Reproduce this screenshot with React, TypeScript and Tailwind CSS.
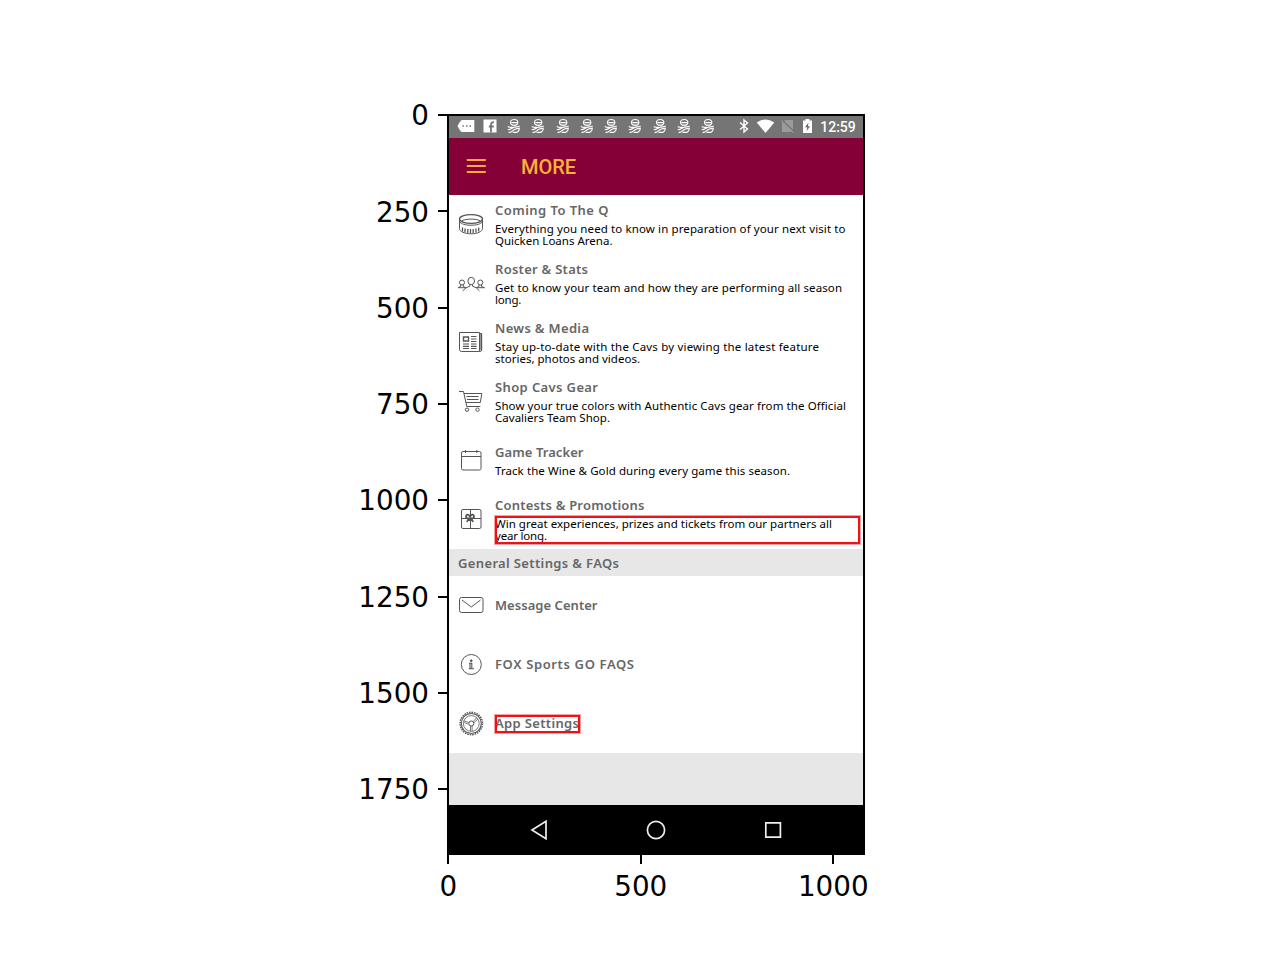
import type { ReactNode } from "react";

const yTicks = [0, 250, 500, 750, 1000, 1250, 1500, 1750];

function Icon({ children }: { children: ReactNode }) {
  return (
    <svg className="mb-[2px] h-7 w-7 shrink-0" viewBox="0 0 28 28" fill="none" stroke="#555" strokeWidth="1">
      {children}
    </svg>
  );
}

const ArenaIcon = () => (
  <Icon>
    <ellipse cx="14" cy="9" rx="11.5" ry="4.3" strokeWidth="1.300" />
    <path d="M4.500 11.200c3-2.800 16-2.800 19 0" />
    <path d="M2.500 9v9.500c0 3 5 5.300 11.500 5.300s11.500-2.300 11.500-5.300V9" />
    <path d="M2.500 11.500c1.500 2.600 6 3.700 11.500 3.700s10-1.100 11.500-3.700" />
    <path d="M5.500 17.500v4M8 18.500v4M10.800 19v4M13.500 19v4M16.200 19v4M19 18.500v4M21.700 17.500v4" strokeWidth="1.300" />
  </Icon>
);
const RosterIcon = () => (
  <Icon>
    <ellipse cx="14.200" cy="12" rx="3.300" ry="3.700" />
    <circle cx="5" cy="13.500" r="2.500" />
    <circle cx="23.300" cy="13.500" r="2.500" />
    <path d="M1 18.700 3.700 17.600V16M6.300 16v1.600L9 18.700M1 18.700h8.200l3.600-1.500v-1.700M15.500 15.500v1.700l3.700 1.500H27.500M27.500 18.700l-3-1.100V16M22 16v1.600l-2.800 1.100M9.200 18.700 5.800 21.800M19.200 18.700l3.200 3.100" />
  </Icon>
);
const NewsIcon = () => (
  <Icon>
    <path d="M2.500 4.500h20v19h-18q-2 0-2-2zM22.500 5.500h2.200v16.500q0 1.500-2 1.500" />
    <path d="M24.200 6v16" strokeWidth="1.600" />
    <path d="M6.500 9h5v4h-5z" strokeWidth="1.400" />
    <path d="M14 8.500h5.500M14 11h5.500M14 13.500h5.500M6 16h6M6 18.300h6M6 20.500h6M14 16h5.500M14 18.300h5.500M14 20.500h5.500" strokeWidth="1.200" />
  </Icon>
);
const CartIcon = () => (
  <Icon>
    <path d="M2 4.500h4.500L9.800 19.500h13.500M7 6.500h17.800L23.300 15.500H9M9.500 9.500H21.500M10 12.500h11.500" />
    <circle cx="10" cy="22.700" r="1.700" />
    <circle cx="20.500" cy="22.700" r="1.700" />
  </Icon>
);
const CalendarIcon = () => (
  <Icon>
    <rect x="4.500" y="5.500" width="19.500" height="18.500" rx="1.500" />
    <path d="M4.500 10.500h19.500M8.500 4v3M19.800 4v3" />
  </Icon>
);
const GiftIcon = () => (
  <Icon>
    <rect x="4.500" y="4.500" width="19.500" height="19" rx="1.500" />
    <path d="M4.500 13.500h19.500M13.500 4.500v19" />
    <path d="M13 12c-1-3.500-4-3-4 0 0 1.200 1 1.500 4 1.500s4-.3 4-1.500c0-3-3-3.500-4 0M11.500 13.500 10 17M14.500 13.500l1.500 3.500M11.500 15h3" strokeWidth="1.800" />
  </Icon>
);
const MailIcon = () => (
  <Icon>
    <rect x="2.500" y="6.500" width="23.500" height="15" rx="2" />
    <path d="M5 9l9.300 7L23.500 9" />
  </Icon>
);
const InfoIcon = () => (
  <Icon>
    <circle cx="14.300" cy="14.500" r="10" />
    <circle cx="14.200" cy="10.700" r=".9" fill="#555" />
    <path d="M12 13.200h2.800v5.300M11.700 18.700h5.300M13 13.500v5" strokeWidth="1.100" />
  </Icon>
);
const GearIcon = () => (
  <Icon>
    <circle cx="14.300" cy="14.500" r="11.200" strokeWidth="1.500" strokeDasharray="1.500 1.010" />
    <circle cx="14.300" cy="14.500" r="10" strokeWidth="1.100" />
    <circle cx="14.300" cy="14.500" r="7.900" strokeWidth=".8" />
    <circle cx="14.300" cy="14.500" r="2.500" />
    <path d="M6.800 11.800l4.900 1.700M7.300 13.500l4 1.700M16.300 12.500l3.300-4M17 13.600l4-3.600M13.500 17v5M15.100 17v5" strokeWidth=".8" />
  </Icon>
);

type Line = { text: string; tracking: string };
type Item = { icon: ReactNode; title: Line; lines: Line[]; boxed?: boolean };

const items: Item[] = [
  {
    icon: <ArenaIcon />,
    title: { text: "Coming To The Q", tracking: "tracking-[0.458px]" },
    lines: [
      { text: "Everything you need to know in preparation of your next visit to", tracking: "tracking-[0.113px]" },
      { text: "Quicken Loans Arena.", tracking: "tracking-[0.008px]" },
    ],
  },
  {
    icon: <RosterIcon />,
    title: { text: "Roster & Stats", tracking: "tracking-[0.273px]" },
    lines: [
      { text: "Get to know your team and how they are performing all season", tracking: "tracking-[0.099px]" },
      { text: "long.", tracking: "tracking-[-0.2px]" },
    ],
  },
  {
    icon: <NewsIcon />,
    title: { text: "News & Media", tracking: "tracking-[0.328px]" },
    lines: [
      { text: "Stay up-to-date with the Cavs by viewing the latest feature", tracking: "tracking-[0.186px]" },
      { text: "stories, photos and videos.", tracking: "tracking-[0.012px]" },
    ],
  },
  {
    icon: <CartIcon />,
    title: { text: "Shop Cavs Gear", tracking: "tracking-[0.379px]" },
    lines: [
      { text: "Show your true colors with Authentic Cavs gear from the Official", tracking: "tracking-[0.085px]" },
      { text: "Cavaliers Team Shop.", tracking: "tracking-[0.027px]" },
    ],
  },
  {
    icon: <CalendarIcon />,
    title: { text: "Game Tracker", tracking: "tracking-[0.075px]" },
    lines: [{ text: "Track the Wine & Gold during every game this season.", tracking: "tracking-[0.078px]" }],
  },
  {
    icon: <GiftIcon />,
    title: { text: "Contests & Promotions", tracking: "tracking-[0.195px]" },
    lines: [
      { text: "Win great experiences, prizes and tickets from our partners all", tracking: "tracking-[0.023px]" },
      { text: "year long.", tracking: "tracking-[-0.193px]" },
    ],
    boxed: true,
  },
];

const settings: Item[] = [
  { icon: <MailIcon />, title: { text: "Message Center", tracking: "tracking-[0.042px]" }, lines: [] },
  { icon: <InfoIcon />, title: { text: "FOX Sports GO FAQS", tracking: "tracking-[0.629px]" }, lines: [] },
  { icon: <GearIcon />, title: { text: "App Settings", tracking: "tracking-[0.342px]" }, lines: [], boxed: true },
];

function Row({ item }: { item: Item }) {
  const titleOnly = item.lines.length === 0;
  return (
    <div className="flex h-[59px] items-center pl-2 text-black">
      {item.icon}
      <div className={`relative ml-[10px] whitespace-nowrap ${titleOnly ? "pb-[2px]" : ""}`}>
        <div className={`h-4 text-[13px] leading-4 font-semibold text-[#666] ${item.title.tracking}`}>{item.title.text}</div>
        {!titleOnly && (
          <div className="pt-[5px]">
            {item.lines.map((line) => (
              <div key={line.text} className={`h-3 text-[11.5px] leading-3 ${line.tracking}`}>
                {line.text}
              </div>
            ))}
          </div>
        )}
        {item.boxed && !titleOnly && (
          <div className="absolute top-[19px] left-0 h-[28px] w-[365px] border-2 border-[#ee1216] shadow-[0_0_0_1px_rgba(238,18,22,0.4)]" />
        )}
        {item.boxed && titleOnly && (
          <div className="absolute top-0 left-0 h-[18px] w-[85px] border-2 border-[#ee1216] shadow-[0_0_0_1px_rgba(238,18,22,0.4)]" />
        )}
      </div>
    </div>
  );
}

function NotificationGlyph() {
  return (
    <svg className="h-4 w-4" viewBox="0 0 16 16" fill="none" stroke="#fff" strokeWidth="1.200" strokeLinecap="round">
      <path d="M4.500 4.500C4.500 2.300 6.200 1.500 8.200 1.500s3.600.8 3.600 3-1.500 2.800-3.500 2.800S4.500 6.700 4.500 4.500zM6 4.600h4.500" />
      <path d="M2.200 8.700c2 1 3.200.5 4.500.6M2.200 11.500c3 .6 4-2 6.500-2.400 2-.3 3.300-.1 4.500-.9M3 14.300c3 .4 4-2.600 6.500-3.300 1.500-.4 2.500-.2 3.500-.8M7.200 14.300c3.800.6 6.400-1 6-4.100" />
    </svg>
  );
}

function StatusBar() {
  return (
    <div className="flex h-[22px] items-center bg-[#757575] pb-[2px] pl-[5px]">
      <div className="flex w-[24px] justify-center">
        <svg className="h-4 w-[18px]" viewBox="0 0 18 16">
          <path d="M5 2h12.300v12H5Q3.500 14 .5 8 3.500 2 5 2z" fill="#fff" />
          <path d="M5.500 8h1.500M9 8h1.500M12.500 8H14" stroke="#777" strokeWidth="1.500" />
        </svg>
      </div>
      <div className="flex w-[24px] justify-center">
        <svg className="h-4 w-4" viewBox="0 0 16 16">
          <path d="M1.500 1.500h13v13h-13z" fill="#fff" />
          <path d="M9 14.500V6.500Q9 4 12 4.200M6.800 8.500h5" stroke="#757575" strokeWidth="1.800" fill="none" />
        </svg>
      </div>
      {Array.from({ length: 9 }, (_, i) => (
        <div key={i} className="flex w-[24.25px] justify-center">
          <NotificationGlyph />
        </div>
      ))}
      <svg className="ml-[16px] h-4 w-4" viewBox="0 0 16 16" fill="none" stroke="#fff" strokeWidth="1.400">
        <path d="M4 4.500l7.500 6.500L8 14V2l3.500 3L4 11.500" />
      </svg>
      <svg className="ml-[4px] h-4 w-[19px]" viewBox="0 0 19 16" fill="#fff">
        <path d="M.7 4.500Q9.500-1.500 18.300 4.500L9.500 15z" />
      </svg>
      <svg className="ml-[6px] h-4 w-[14px]" viewBox="0 0 14 16">
        <path d="M1 5l3.500-3H12v12H1z" fill="#9b9b9b" />
        <path d="M.5 2l13 12.500" stroke="#757575" strokeWidth="2.200" />
        <path d="M.3 2.800l12.500 12" stroke="#a5a5a5" strokeWidth="1" />
      </svg>
      <svg className="ml-[7px] h-4 w-[11px]" viewBox="0 0 11 16">
        <path d="M1 2.500h2.500V1h4v1.500H10v12.500H1z" fill="#fff" />
        <path d="M6.500 4.500L3 9.300h2.300l-.8 4L8 8.300H5.900z" fill="#666" />
      </svg>
      <span className="ml-[7px] pt-[2px] font-[Roboto,sans-serif] text-[14px] leading-none font-medium text-white">12:59</span>
    </div>
  );
}

function Phone() {
  return (
    <div className="h-[741px] w-[418px] border-2 border-black bg-white font-['Noto_Sans',sans-serif]">
      <StatusBar />
      <div className="flex h-[57px] items-center bg-[#850036]">
        <svg className="mb-[2px] ml-[17px] h-5 w-5" viewBox="0 0 20 20" stroke="#f8a935" strokeWidth="2">
          <path d="M.8 4h19M.8 10h19M.8 16h19" />
        </svg>
        <span className="ml-[35px] pt-px font-[Roboto,sans-serif] text-[20px] font-medium text-[#fbb03b]">MORE</span>
      </div>
      <div className="h-[354px]">
        {items.map((item) => (
          <Row key={item.title.text} item={item} />
        ))}
      </div>
      <div className="flex h-[27px] items-center bg-[#e7e7e7] pt-[2px] pl-[9px] text-[13px] font-semibold tracking-[0.359px] text-[#666]">
        General Settings &amp; FAQs
      </div>
      <div className="h-[177px]">
        {settings.map((item) => (
          <Row key={item.title.text} item={item} />
        ))}
      </div>
      <div className="h-[52px] bg-[#e7e7e7]" />
      <div className="flex h-12 items-center bg-black">
        <svg className="h-12 w-full" viewBox="0 0 414 48" fill="none" stroke="#eee" strokeWidth="1.700">
          <path d="M97 16.300v17.400L83 25z" />
          <circle cx="207" cy="25" r="8.600" />
          <path d="M316.800 17.800h14.600v14.400h-14.600z" />
        </svg>
      </div>
    </div>
  );
}

export default function App() {
  return (
    <div className="h-[960px] w-[1280px] overflow-hidden bg-white font-['DejaVu_Sans',sans-serif] text-[27.780px] leading-none text-black">
      <div className="flex pt-[114px]">
        <div className="-mt-[47px] h-[788px] w-[447px]">
          {yTicks.map((tick) => (
            <div key={tick} className="flex h-[96.300px] items-center justify-end">
              <span className="pt-[2px] pr-[9px]">{tick}</span>
              <span className="h-[2px] w-[9px] bg-black" />
            </div>
          ))}
        </div>
        <Phone />
      </div>
      <div className="flex pl-[352px]">
        {[0, 500, 1000].map((tick) => (
          <div key={tick} className="flex w-[192.500px] flex-col items-center">
            <span className="h-[9px] w-[2px] bg-black" />
            <span className="mt-[9px]">{tick}</span>
          </div>
        ))}
      </div>
    </div>
  );
}
